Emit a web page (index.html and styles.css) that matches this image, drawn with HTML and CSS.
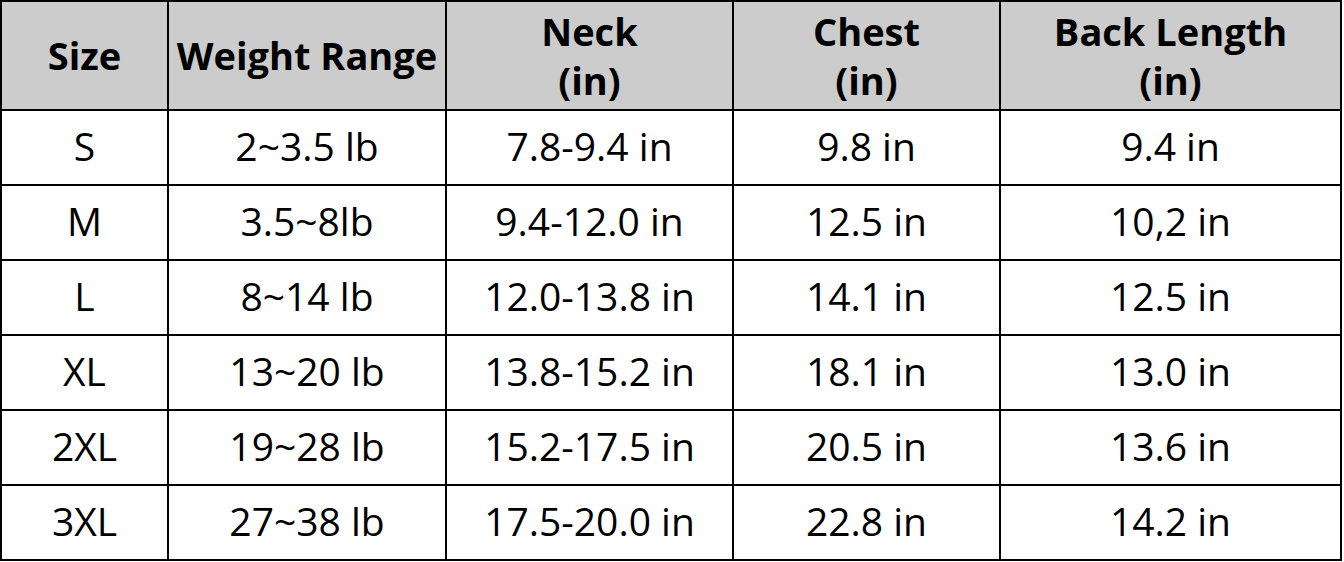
FILE: index.html
```html
<!DOCTYPE html>
<html>
<head>
<meta charset="utf-8">
<link rel="stylesheet" href="styles.css">
</head>
<body>
<table class="size-table">
  <colgroup>
    <col class="c1"><col class="c2"><col class="c3"><col class="c4"><col class="c5">
  </colgroup>
  <thead>
    <tr>
      <th>Size</th>
      <th>Weight Range</th>
      <th>Neck<br>(in)</th>
      <th>Chest<br>(in)</th>
      <th>Back Length<br>(in)</th>
    </tr>
  </thead>
  <tbody>
    <tr><td>S</td><td>2~3.5 lb</td><td>7.8-9.4 in</td><td>9.8 in</td><td>9.4 in</td></tr>
    <tr><td>M</td><td>3.5~8lb</td><td>9.4-12.0 in</td><td>12.5 in</td><td>10,2 in</td></tr>
    <tr><td>L</td><td>8~14 lb</td><td>12.0-13.8 in</td><td>14.1 in</td><td>12.5 in</td></tr>
    <tr><td>XL</td><td>13~20 lb</td><td>13.8-15.2 in</td><td>18.1 in</td><td>13.0 in</td></tr>
    <tr><td>2XL</td><td>19~28 lb</td><td>15.2-17.5 in</td><td>20.5 in</td><td>13.6 in</td></tr>
    <tr><td>3XL</td><td>27~38 lb</td><td>17.5-20.0 in</td><td>22.8 in</td><td>14.2 in</td></tr>
  </tbody>
</table>
</body>
</html>
```
FILE: styles.css
```css
html, body {
  margin: 0;
  padding: 0;
  background: #ffffff;
}
.size-table {
  border-collapse: collapse;
  table-layout: fixed;
  width: 1340px;
  font-family: "Open Sans", "Noto Sans", sans-serif;
  color: #000;
}
.c1 { width: 167px; }
.c2 { width: 278px; }
.c3 { width: 287px; }
.c4 { width: 267px; }
.c5 { width: 341px; }
.size-table th,
.size-table td {
  border: 2px solid #000;
  text-align: center;
  vertical-align: middle;
  padding: 0;
}
.size-table th {
  background: #cccccc;
  font-weight: 700;
  font-size: 38px;
  line-height: 49px;
  height: 107px;
}
.size-table td {
  font-size: 39px;
  line-height: 50px;
  height: 70px;
  padding-bottom: 3px;
  font-weight: 400;
}
```
